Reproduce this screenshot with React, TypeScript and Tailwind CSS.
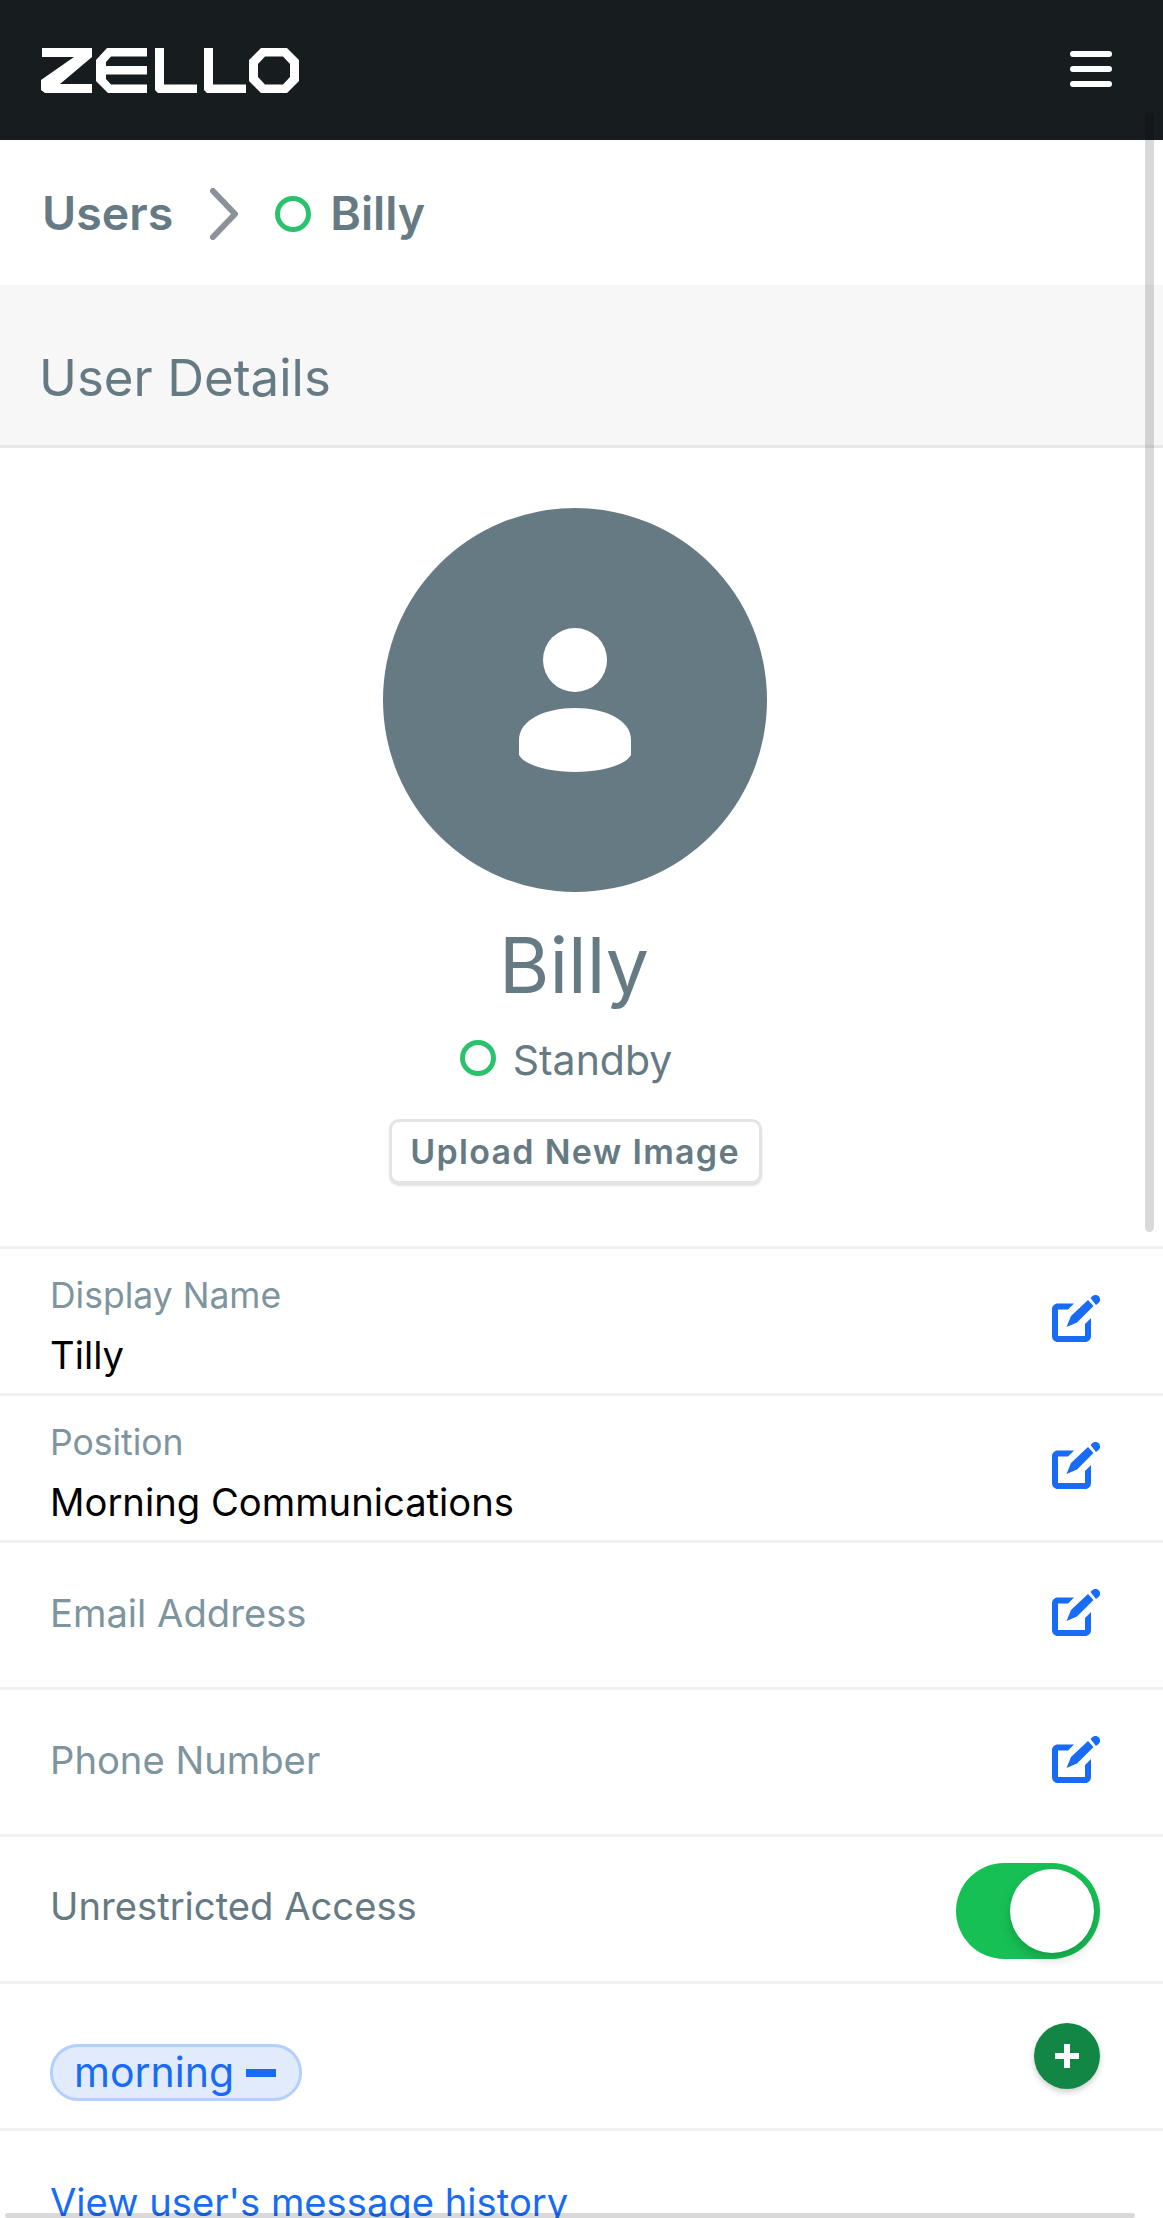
const font = "font-['Inter','Liberation_Sans',sans-serif]";

function ZelloLogo() {
  return (
    <svg width="258" height="45" viewBox="0 0 258 45" fill="white">
      <path d="M1 0H51V9L19 36H51V45H4L0 42V32L33 9H1Z" />
      <path d="M66 0H106V8.500H70L65 14V18H106V26.500H65V31L70 36.500H106V45H67L55 33V12Z" />
      <path d="M114 0H123V36.500H156V45H117L114 42Z" />
      <path d="M163 0H172V36.500H205V45H166L163 42Z" />
      <path fillRule="evenodd" d="M220 0H246L258 12V33L246 45H220L208 33V12ZM224 8.500L217 16V29L224 36.500H242L249 29V16L242 8.500Z" />
    </svg>
  );
}

function MenuIcon() {
  return (
    <svg width="42" height="36" viewBox="0 0 42 36" fill="white" className="mb-[2px]">
      <rect width="42" height="6" rx="3" />
      <rect y="15" width="42" height="6" rx="3" />
      <rect y="30" width="42" height="6" rx="3" />
    </svg>
  );
}

function EditIcon() {
  return (
    <svg width="48" height="48" viewBox="0 0 48 48" fill="#176bf4" className="mb-[6px]">
      <path d="M6 9.500H22L16 15.500H6V42H33V30L39 24V42C39 45.500 36.500 48 33 48H6C2.500 48 0 45.500 0 42V15.500C0 12 2.500 9.500 6 9.500Z" />
      <path d="M14.500 33L19 22L36 6L41.500 12L25 28.500Z" />
      <path d="M38.500 4L40 2.500C42 .5 45 .5 47 2.500C48.500 4.500 48.500 7 46.500 9L44 11Z" />
    </svg>
  );
}

function Row({ children }: { children: React.ReactNode }) {
  return (
    <div className="flex h-[147px] items-center justify-between border-b-[3px] border-[#f1f1f1] pl-[50px] pr-[63px]">
      <div>{children}</div>
      <EditIcon />
    </div>
  );
}

function Field({ label, value }: { label: string; value: string }) {
  return (
    <div className="pt-[8px]">
      <div className="text-[35.500px] leading-[44px] text-[#7e949e]">{label}</div>
      <div className="mt-[15px] text-[38.200px] leading-[44px] text-black">{value}</div>
    </div>
  );
}

function EmptyField({ label }: { label: string }) {
  return <div className="mb-[4px] text-[38.200px] leading-[44px] text-[#7e949e]">{label}</div>;
}

export default function App() {
  return (
    <div className={`relative h-[2218px] overflow-hidden bg-white ${font}`}>
      <header className="flex h-[140px] items-center justify-between bg-[#171c1f] pl-[41px] pr-[51px]">
        <ZelloLogo />
        <MenuIcon />
      </header>

      <nav className="flex h-[145px] items-center pl-[42px] pt-[2px] text-[46.500px] font-semibold text-[#667a84]">
        <span>Users</span>
        <svg width="28" height="52" viewBox="0 0 28 52" fill="none" className="ml-[37px]" stroke="#8c9299" strokeWidth="6" strokeLinecap="round" strokeLinejoin="round">
          <path d="M3 3L25 26L3 49" />
        </svg>
        <span className="ml-[37px] size-[36px] rounded-full border-[5px] border-[#2ac26d]" />
        <span className="ml-[19px]">Billy</span>
      </nav>

      <div className="flex h-[163px] items-center border-b-[3px] border-[#e8e8e8] bg-[#f7f7f7] pl-[39px] pt-[26px] text-[51px] text-[#667a84]">
        User Details
      </div>

      <section className="flex h-[801px] flex-col items-center border-b-[3px] border-[#f1f1f1] pr-[13px] pt-[60px]">
        <div className="flex size-[384px] items-center justify-center rounded-full bg-[#667a84]">
          <svg width="112" height="144" viewBox="0 0 112 144" fill="white">
            <circle cx="56" cy="32" r="32" />
            <path d="M0 112C0 92 26 80 56 80C86 80 112 92 112 112V127C106 138 80 144 56 144C32 144 6 138 0 127Z" />
          </svg>
        </div>
        <div className="mt-[27px] pr-[2px] text-[77px] leading-[92px] text-[#667a84]">Billy</div>
        <div className="mt-[21px] flex items-center pr-[18px] text-[41px] leading-[56px] text-[#667a84]">
          <span className="mb-[4px] size-[36px] rounded-full border-[5px] border-[#2ac26d]" />
          <span className="ml-[17px]">Standby</span>
        </div>
        <button className="mt-[31px] h-[65px] w-[373px] rounded-[10px] border-[3px] border-[#e4e4e4] bg-white text-[34px] font-semibold tracking-[1.3px] text-[#667a84] shadow-[0_2px_2px_rgba(0,0,0,0.12)]">
          Upload New Image
        </button>
      </section>

      <Row>
        <Field label="Display Name" value="Tilly" />
      </Row>
      <Row>
        <Field label="Position" value="Morning Communications" />
      </Row>
      <Row>
        <EmptyField label="Email Address" />
      </Row>
      <Row>
        <EmptyField label="Phone Number" />
      </Row>

      <div className="flex h-[147px] items-center justify-between border-b-[3px] border-[#f1f1f1] pl-[50px] pr-[63px]">
        <div className="mb-[4px] text-[38.200px] text-[#667a84]">Unrestricted Access</div>
        <div className="mt-[4px] flex h-[96px] w-[144px] items-center justify-end rounded-full bg-[#17c055] pr-[6px]">
          <div className="size-[84px] rounded-full bg-white shadow-[0_6px_12px_rgba(0,0,0,0.18)]" />
        </div>
      </div>

      <div className="flex h-[147px] justify-between border-b-[3px] border-[#f1f1f1] pl-[50px] pr-[63px]">
        <div className="mt-[60px] flex h-[57px] w-[252px] items-center self-start rounded-[28px] border-[3px] border-[#b3cffb] bg-[#e2ebfc] pl-[21px] text-[41px] text-[#176bf4]">
          morning
          <span className="ml-[12px] h-[8px] w-[30px] bg-[#176bf4]" />
        </div>
        <div className="mt-[39px] flex size-[66px] items-center justify-center rounded-full bg-[#128745] shadow-[0_3px_6px_rgba(0,0,0,0.2)]">
          <svg width="24" height="24" viewBox="0 0 24 24" fill="white">
            <path d="M9 0H15V9H24V15H15V24H9V15H0V9H9Z" />
          </svg>
        </div>
      </div>

      <div className="pl-[50px] pt-[43px] text-[38.200px] text-[#176bf4]">View user's message history</div>

      {/* overlay scrollbars */}
      <div className="absolute left-[1145px] top-[112px] h-[1120px] w-[9px] rounded-full bg-black/15" />
      <div className="absolute left-[5px] top-[2213px] h-[5px] w-[1130px] rounded-full bg-black/15" />
    </div>
  );
}
